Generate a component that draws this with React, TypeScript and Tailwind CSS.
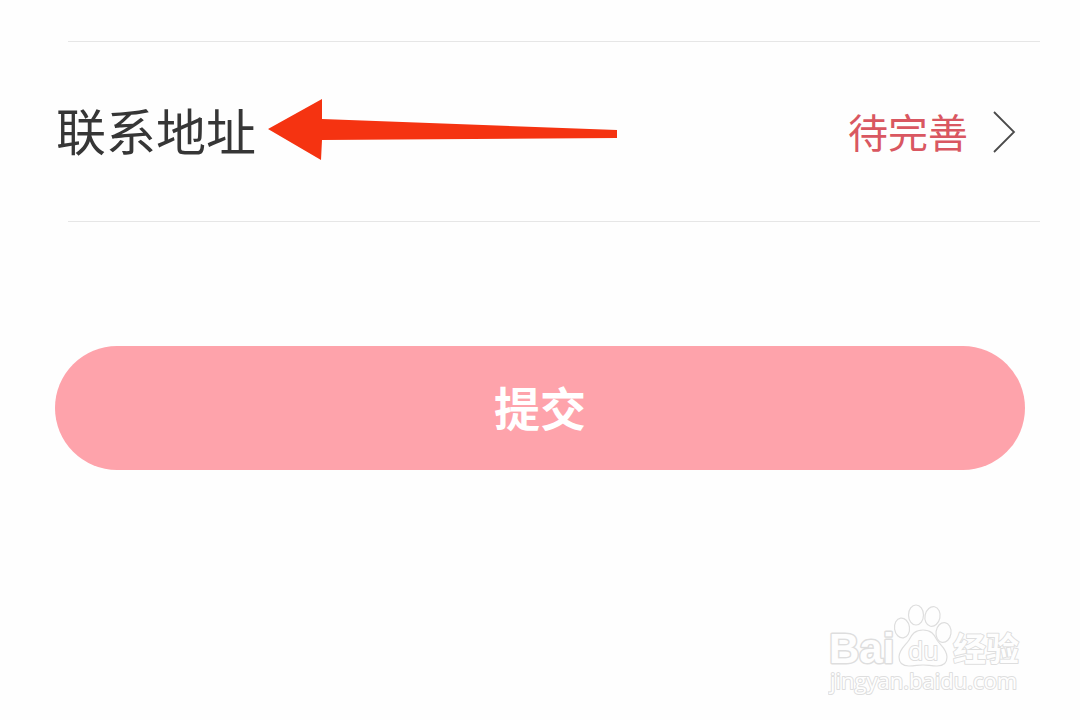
function AnnotationArrow() {
  return (
    <svg width="350" height="66" viewBox="0 0 350 66" className="ml-3 shrink-0" aria-hidden="true">
      <path d="M0 30 L54 0 V20 L349 31 V39 L54 41 L53 61 Z" fill="#f53311" />
    </svg>
  )
}

function ChevronIcon() {
  return (
    <svg width="24" height="44" viewBox="0 0 24 44" fill="none" className="shrink-0" aria-hidden="true">
      <path d="M2 2 L22 22 L2 42" stroke="#4a4a4a" strokeWidth="1.8" />
    </svg>
  )
}

function Watermark() {
  return (
    <svg
      width="196"
      height="96"
      viewBox="0 0 196 96"
      role="img"
      aria-label="Baidu 经验"
      fill="#fefefe"
      stroke="#dedede"
      strokeWidth="1.2"
      strokeLinejoin="round"
      className="font-['Open_Sans','Noto_Sans_CJK_SC',sans-serif]"
    >
      <text
        x="1"
        y="61"
        fontSize="42"
        strokeWidth="3"
        paintOrder="stroke"
        className="font-['Liberation_Sans',sans-serif] font-bold"
      >
        Bai
      </text>
      <ellipse cx="74" cy="26" rx="7.5" ry="10" transform="rotate(-8 74 26)" />
      <ellipse cx="88" cy="13" rx="7.5" ry="10" />
      <ellipse cx="104.5" cy="14.5" rx="7.5" ry="10" transform="rotate(12 104.5 14.5)" />
      <ellipse cx="115.5" cy="30.5" rx="7.5" ry="10" transform="rotate(8 115.5 30.5)" />
      <path d="M95 28 C103 28 106 32 109 38 C112 43 119 47 119 55 C119 61 115 64 109 64 C103 64 100 63 95 63 C90 63 87 64 81 64 C75 64 71 61 71 55 C71 47 78 43 81 38 C84 32 87 28 95 28 Z" />
      <text x="80" y="58" fontSize="25" strokeWidth="2" paintOrder="stroke">
        du
      </text>
      <text x="125" y="59" fontSize="33" strokeWidth="2" paintOrder="stroke" className="font-bold">
        经验
      </text>
      <text x="2" y="87" fontSize="22" strokeWidth="2" paintOrder="stroke">
        jingyan.baidu.com
      </text>
    </svg>
  )
}

export default function App() {
  return (
    <main className="min-h-screen bg-[#fefefe] pt-10 font-['Noto_Sans_CJK_SC',sans-serif]">
      <div className="mt-px mr-10 ml-17 h-px bg-[#e6e6e6]" />
      <button type="button" className="flex w-full items-center py-14 pr-16 pl-14 text-left">
        <span className="shrink-0 pb-1 text-[50px] leading-[63px] text-[#363636]">联系地址</span>
        <AnnotationArrow />
        <span className="mr-6 ml-auto shrink-0 text-[40px] leading-[63px] text-[#d95761]">待完善</span>
        <ChevronIcon />
      </button>
      <div className="mr-10 ml-17 h-px bg-[#e6e6e6]" />

      <div className="px-[55px] pt-31">
        <button type="submit" className="h-31 w-full rounded-full bg-[#fea3ab] pb-1 text-[46px] font-bold text-white">
          提交
        </button>
      </div>

      <footer className="flex justify-end pt-33 pr-14">
        <Watermark />
      </footer>
    </main>
  )
}
